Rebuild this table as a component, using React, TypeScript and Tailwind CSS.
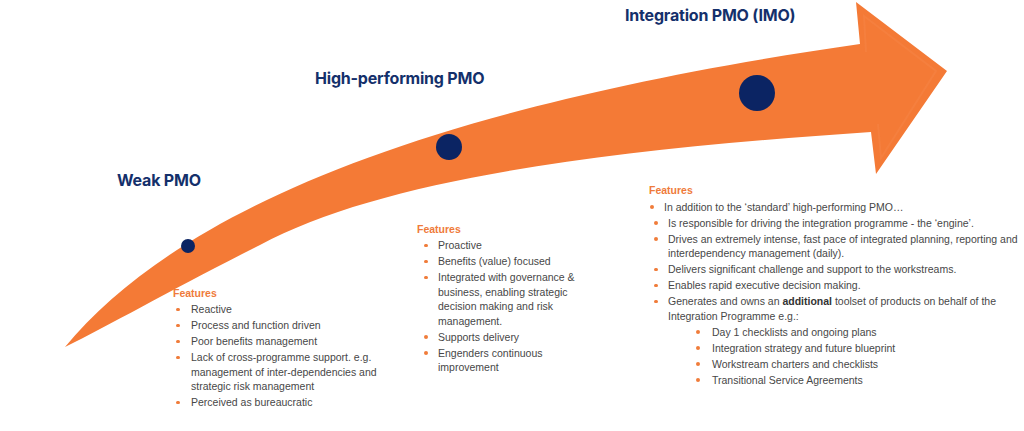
import React from 'react';

type Item = { text: React.ReactNode; sub?: string[] };

const weak: Item[] = [
  { text: 'Reactive' },
  { text: 'Process and function driven' },
  { text: 'Poor benefits management' },
  { text: 'Lack of cross-programme support. e.g. management of inter-dependencies and strategic risk management' },
  { text: 'Perceived as bureaucratic' },
];

const high: Item[] = [
  { text: 'Proactive' },
  { text: 'Benefits (value) focused' },
  { text: 'Integrated with governance & business, enabling strategic decision making and risk management.' },
  { text: 'Supports delivery' },
  { text: 'Engenders continuous improvement' },
];

const imo: Item[] = [
  { text: 'Is responsible for  driving the integration programme - the \u2018engine\u2019.' },
  { text: 'Drives an extremely intense, fast pace of integrated planning, reporting and interdependency management (daily).' },
  { text: 'Delivers significant challenge and support to the workstreams.' },
  { text: 'Enables rapid executive decision making.' },
  {
    text: (
      <>
        Generates and owns an <strong className="font-bold text-[#333]">additional</strong> toolset of products on behalf of the Integration Programme e.g.:
      </>
    ),
    sub: [
      'Day 1 checklists and ongoing plans',
      'Integration strategy and future blueprint',
      'Workstream charters and checklists',
      'Transitional Service Agreements',
    ],
  },
];

// small orange dot, centred on the first text line
function Bullet({ className }: { className: string }) {
  return (
    <span className={`flex h-[14.5px] shrink-0 items-center ${className}`}>
      <span className="h-[3.5px] w-[3.5px] rounded-full bg-[#f07c3a]" />
    </span>
  );
}

function Features() {
  return <p className="font-bold text-[#ef7b3b]">Features</p>;
}

function Arrow() {
  return (
    <svg className="absolute left-0 top-0" width="1024" height="431" viewBox="0 0 1024 431">
      <path
        d="M65 347 C170 220 400 110 860 44 L856 2 L947 71 L876 174 L871 132 C600 150 380 180 260 245 C180 285 110 325 65 347 Z"
        fill="#f47a36"
      />
      <path d="M866 52 L864 16 L936 71 L881 158 L878 124" fill="none" stroke="#f58a4c" strokeWidth="2" opacity="0.35" />
      <circle cx="188" cy="246" r="7" fill="#0b2463" />
      <circle cx="449" cy="147" r="13" fill="#0b2463" />
      <circle cx="757" cy="93" r="18" fill="#0b2463" />
    </svg>
  );
}

export default function App() {
  return (
    <div
      className="relative h-[431px] w-[1024px] overflow-hidden bg-white text-[10.5px] leading-[14.5px] text-[#474747]"
      style={{ fontFamily: '"Liberation Sans", Arial, sans-serif' }}
    >
      <Arrow />

      <h2 className="absolute left-[117px] top-[173px] text-[16px] font-bold tracking-[-0.2px] text-[#14306b]" style={{ fontFamily: 'Inter, sans-serif' }}>
        Weak PMO
      </h2>
      <h2 className="absolute left-[315px] top-[71px] text-[16px] font-bold tracking-[-0.2px] text-[#14306b]" style={{ fontFamily: 'Inter, sans-serif' }}>
        High-performing PMO
      </h2>
      <h2 className="absolute left-[625px] top-[8px] text-[16px] font-bold tracking-[-0.2px] text-[#14306b]" style={{ fontFamily: 'Inter, sans-serif' }}>
        Integration PMO (IMO)
      </h2>

      <div className="absolute left-[173px] top-[286px] w-[205px]">
        <Features />
        <ul className="mt-[1.5px] ml-[3px] space-y-[1.5px]">
          {weak.map((item, i) => (
            <li key={i} className="flex">
              <Bullet className="w-[15px]" />
              <span>{item.text}</span>
            </li>
          ))}
        </ul>
      </div>

      <div className="absolute left-[417px] top-[222px] w-[162px]">
        <Features />
        <ul className="mt-[1.5px] ml-[7px] space-y-[1.5px]">
          {high.map((item, i) => (
            <li key={i} className="flex">
              <Bullet className="w-[14px]" />
              <span>{item.text}</span>
            </li>
          ))}
        </ul>
      </div>

      <div className="absolute left-[649px] top-[183px] w-[370px]">
        <Features />
        <ul className="mt-[2px] space-y-[1.5px]">
          <li className="ml-[1px] flex">
            <Bullet className="w-[14px]" />
            <span>In addition to the {'\u2018'}standard{'\u2019'} high-performing PMO…</span>
          </li>
          {imo.map((item, i) => (
            <li key={i} className="ml-[5px]">
              <div className="flex">
                <Bullet className="w-[14px]" />
                <span>{item.text}</span>
              </div>
              {item.sub && (
                <ul className="mt-[1.5px] ml-[42px] space-y-[1.5px]">
                  {item.sub.map((s) => (
                    <li key={s} className="flex">
                      <Bullet className="w-[16px]" />
                      <span>{s}</span>
                    </li>
                  ))}
                </ul>
              )}
            </li>
          ))}
        </ul>
      </div>
    </div>
  );
}
